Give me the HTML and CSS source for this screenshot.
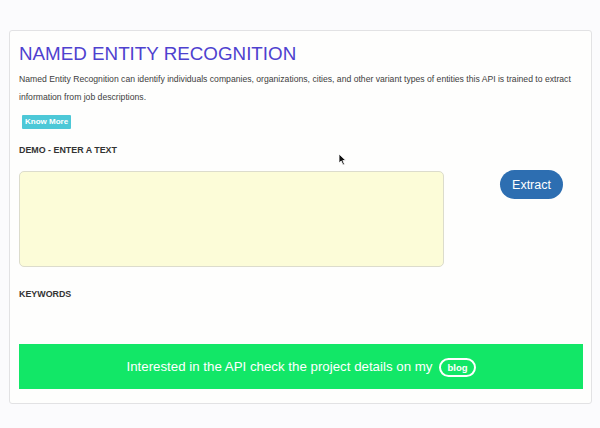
FILE: index.html
```html
<!DOCTYPE html>
<html>
<head>
<meta charset="utf-8">
<link rel="stylesheet" href="styles.css">
</head>
<body>
<div class="card">
  <h1 class="title">NAMED ENTITY RECOGNITION</h1>
  <p class="intro">Named Entity Recognition can identify individuals companies, organizations, cities, and other variant types of entities this API is trained to extract information from job descriptions.</p>
  <a class="know">Know More</a>
  <div class="label demo">DEMO - ENTER A TEXT</div>
  <div class="row">
    <textarea class="input"></textarea>
    <button class="extract">Extract</button>
  </div>
  <div class="label keywords">KEYWORDS</div>
  <div class="banner">
    <span>Interested in the API check the project details on my</span>
    <a class="blog">blog</a>
  </div>
</div>
<svg class="cursor" width="9" height="13" viewBox="0 0 9 13"><path d="M1 1 L1 10 L3.2 8 L5 12 L6.5 11.3 L4.8 7.5 L7.8 7.5 Z" fill="#111" stroke="#fff" stroke-width="0.8"/></svg>
</body>
</html>
```
FILE: styles.css
```css
html, body {
  margin: 0;
  padding: 0;
  background: #fbfbfd;
  font-family: "Liberation Sans", Arial, sans-serif;
}
body {
  position: relative;
  width: 600px;
  height: 428px;
  overflow: hidden;
}
.card {
  margin: 30px 0 0 9px;
  width: 583px;
  box-sizing: border-box;
  background: #fefefd;
  border: 1px solid #e2e2e4;
  border-radius: 3px;
  padding: 12px 8px 14px 9px;
}
.title {
  margin: 0;
  font-size: 18.8px;
  font-weight: normal;
  line-height: 21px;
  color: #4e41cf;
}
.intro {
  margin: 6px 0 0 0;
  font-size: 8.65px;
  line-height: 18px;
  color: #404040;
}
.know {
  display: inline-block;
  margin: 9px 0 0 3px;
  background: #4dc8d7;
  color: #fff;
  font-size: 8px;
  font-weight: bold;
  line-height: 14px;
  padding: 0 3px;
  border-radius: 1px;
}
.label {
  font-size: 8.9px;
  font-weight: bold;
  color: #333;
  line-height: 12px;
}
.demo {
  margin-top: 15px;
}
.row {
  display: flex;
  align-items: flex-start;
  margin-top: 15px;
}
.input {
  display: block;
  width: 425px;
  height: 96px;
  box-sizing: border-box;
  margin: 0;
  background: #fcfcd8;
  border: 1px solid #dcdccc;
  border-radius: 5px;
  resize: none;
}
.extract {
  margin: -1px 0 0 56px;
  width: 63px;
  height: 29px;
  border: none;
  border-radius: 15px;
  background: #2d6eb1;
  color: #fff;
  font-family: "Liberation Sans", Arial, sans-serif;
  font-size: 12.5px;
  padding: 0;
}
.keywords {
  margin-top: 21px;
}
.banner {
  margin-top: 44px;
  height: 45px;
  background: #12e767;
  display: flex;
  align-items: center;
  justify-content: center;
  gap: 7px;
  color: #fff;
  font-size: 13.3px;
}
.blog {
  display: inline-block;
  border: 2px solid #fff;
  border-radius: 10px;
  font-size: 9.5px;
  font-weight: bold;
  line-height: 15px;
  padding: 0 6px;
  margin-top: 2px;
}
.cursor {
  position: absolute;
  left: 338px;
  top: 153px;
}
```
